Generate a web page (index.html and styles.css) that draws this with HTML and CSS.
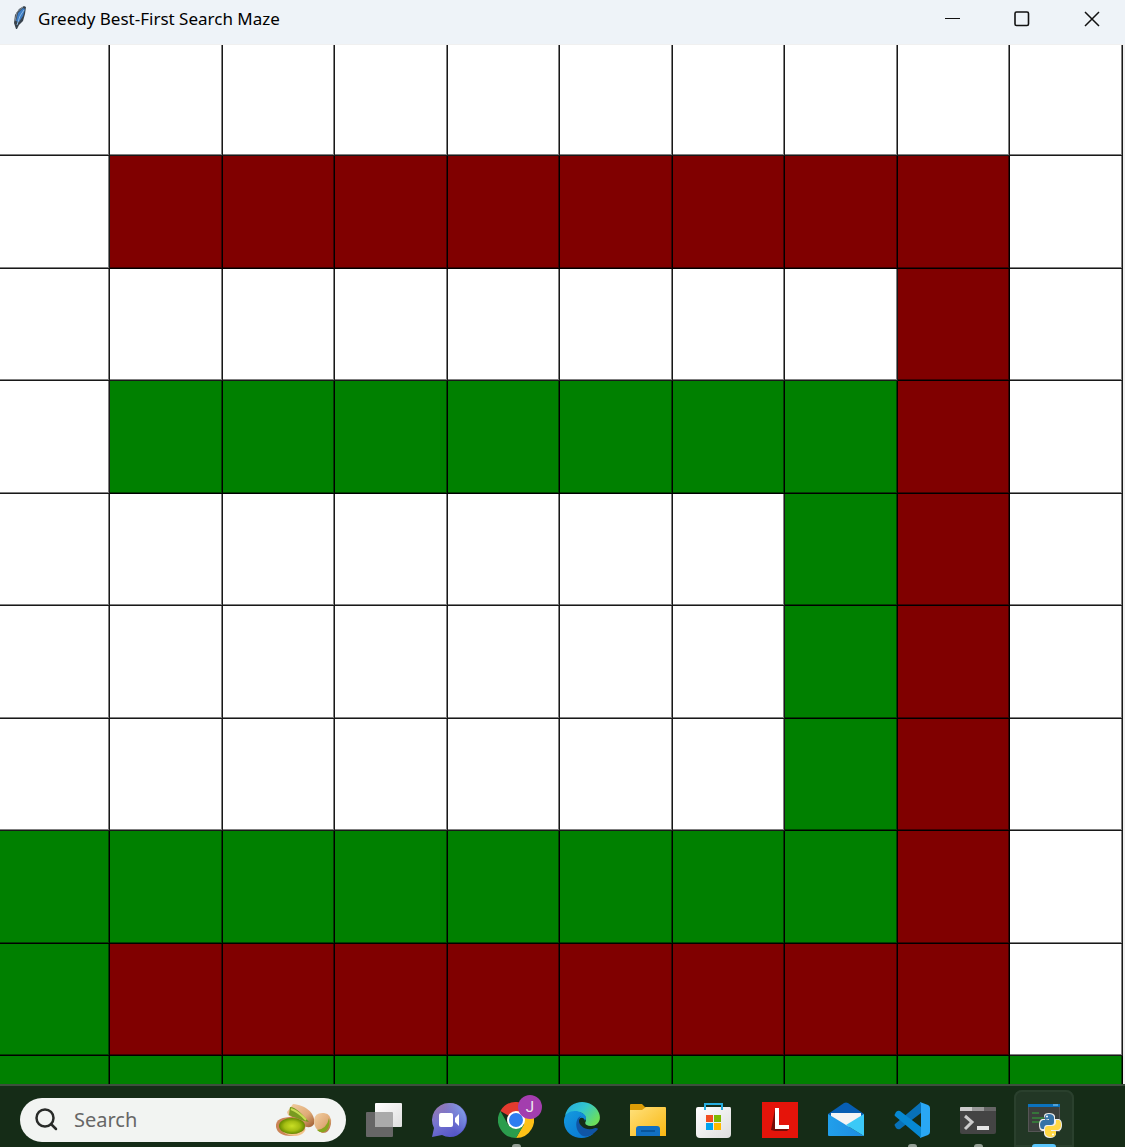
FILE: index.html
```html
<!DOCTYPE html>
<html lang="en">
<head>
<meta charset="utf-8">
<title>Greedy Best-First Search Maze</title>
<link rel="stylesheet" href="styles.css">
</head>
<body>
<header class="titlebar">
  <svg class="feather" viewBox="0 0 16 26" aria-hidden="true"><path d="M4 24 2 18 3 10 7 4 12 1 14 2 13 9 11 16 7 20 5 24Z" fill="#39434d"/><path d="M4 16 6 8 11 3 13 4 11 11 7 17Z" fill="#3d7cc4"/><path d="M3 16 5 7 11 2" fill="none" stroke="#879099"/><path d="m5 20 3-9 4-6" fill="none" stroke="#8fbce6"/></svg>
  <h1 class="title">Greedy Best-First Search Maze</h1>
  <div class="controls">
    <button class="control" aria-label="Minimize"><svg viewBox="0 0 16 16"><path d="M1 7.500h15"/></svg></button>
    <button class="control" aria-label="Maximize"><svg viewBox="0 0 16 16"><rect x="1" y="1" width="13.500" height="13.500" rx="1.500" stroke-width="1.600"/></svg></button>
    <button class="control" aria-label="Close"><svg viewBox="0 0 16 16"><path d="m1 1 14 14M15 1 1 15" stroke-width="1.500"/></svg></button>
  </div>
</header>
<main class="maze" id="maze"></main>
<footer class="taskbar">
  <label class="search">
    <svg class="lens" viewBox="0 0 24 24" aria-hidden="true"><circle cx="10" cy="10" r="8.500"/><path d="m16 16 5 5"/></svg>
    <input class="search-input" type="text" placeholder="Search" aria-label="Search">
    <svg class="pistachio" viewBox="0 0 58 34" aria-hidden="true">
      <defs><linearGradient id="shell" x2="1" y2="1"><stop stop-color="#f3d0a4"/><stop offset=".6" stop-color="#dfaa77"/><stop offset="1" stop-color="#9b572d"/></linearGradient><radialGradient id="nut"><stop stop-color="#c9df25"/><stop offset=".6" stop-color="#a4bd12"/><stop offset="1" stop-color="#658900"/></radialGradient></defs>
      <path d="M12 9 18 1C30 2 41 10 39 21Q35 27 27 22L13 12Z" fill="url(#shell)"/>
      <path d="M15 4C21 4 27 11 34 19Q22 17 14 12Z" fill="#789a20"/><path d="M16 6Q24 9 31 17" fill="none" stroke="#c7dc55" stroke-width="2"/>
      <path d="M1 24C0 16 8 14 18 14 27 16 32 20 30 26 28 31 22 33 16 33 8 33 2 30 1 24Z" fill="#cb8457"/><path d="M5 25Q17 36 31 26 28 33 20 33 10 33 5 25Z" fill="#f3c48c"/><ellipse cx="17" cy="23" rx="13" ry="8" fill="url(#nut)"/>
      <path d="M39 17Q40 9 49 10 57 11 56 21 54 31 47 30 39 27 39 17Z" fill="url(#shell)"/><path d="M54 15Q52 26 42 27 46 31 51 28 56 22 54 15Z" fill="#86a61d"/>
    </svg>
  </label>
  <nav class="apps" aria-label="Taskbar">
    <button class="app" aria-label="Task view"><svg class="icon" viewBox="0 0 36 36"><defs><linearGradient id="pane" x2="1" y2="1"><stop stop-color="#fff"/><stop offset="1" stop-color="#dedede"/></linearGradient></defs><rect x="9" y="1" width="27" height="24" rx="1" fill="url(#pane)"/><path d="M1 10h8v15h18v9q0 1-1 1H1q-1 0-1-1V11q0-1 1-1Z" fill="#666"/><path d="M9 10h17q1 0 1 1v14H9Z" fill="#aaa"/></svg></button>
    <button class="app" aria-label="Chat"><svg class="icon" viewBox="0 0 36 36"><defs><linearGradient id="chat" x1=".1" x2=".7" y2="1"><stop stop-color="#9b79ac"/><stop offset=".45" stop-color="#7775cf"/><stop offset="1" stop-color="#5052c8"/></linearGradient><linearGradient id="sky" x1=".2" y1=".5" x2="1" y2=".1"><stop offset=".3" stop-color="#7785dc" stop-opacity="0"/><stop offset="1" stop-color="#83acf0"/></linearGradient></defs><path d="M17 1a17 17 0 1 1-7 32L0 35l2-9A17 17 0 0 1 17 1Z" fill="url(#chat)"/><circle cx="17" cy="18" r="17" fill="url(#sky)"/><rect x="7" y="11" width="14" height="14" rx="2" fill="#fff"/><path d="m23 16 4-4v12l-4-4Z" fill="#fff"/></svg></button>
    <button class="app" aria-label="Chrome"><svg class="icon" viewBox="0 0 36 36"><path d="M18 18 2.400 9A18 18 0 0 1 33.600 9L18 9Z" fill="#e33b2e"/><path d="M18 9h15.600A18 18 0 0 1 18 36l8-14Z" fill="#fdc116"/><path d="M2.400 9 10 22.500l16 0L18 36A18 18 0 0 1 2.400 9Z" fill="#2b9d4d"/><circle cx="18" cy="18" r="9" fill="#fff"/><circle cx="18" cy="18" r="7" fill="#2d7df0"/></svg><span class="badge">J</span><span class="running"></span></button>
    <button class="app" aria-label="Edge"><svg class="icon" viewBox="0 0 36 36"><defs><linearGradient id="wave" x2="1" y2=".6"><stop stop-color="#24a7df"/><stop offset=".5" stop-color="#32c6cf"/><stop offset="1" stop-color="#6cdf5b"/></linearGradient><linearGradient id="blue" y2="1"><stop stop-color="#149bdf"/><stop offset="1" stop-color="#0872cf"/></linearGradient></defs><path d="M1 14C4-3 28-5 35 11 38 19 33 24 27 24 22 24 20 22 22 19 23 10 11 6 1 14Z" fill="url(#wave)"/><path d="M0 18C1 9 11 7 18 11 22 13 23 16 21 19 20 14 14 15 14 21 14 28 23 30 29 32 18 41-1 34 0 18Z" fill="url(#blue)"/><path d="M17 14C10 17 11 30 19 34 25 36 31 31 34 27 34 26 32 26 31 26 23 30 15 24 15 19Q15 16 17 14Z" fill="#1055a5"/></svg></button>
    <button class="app" aria-label="File Explorer"><svg class="icon" viewBox="0 0 36 36"><defs><linearGradient id="folder" x2="1" y2="1"><stop stop-color="#ffe17c"/><stop offset="1" stop-color="#f9b711"/></linearGradient></defs><path d="M0 3q0-1 1-1h11l3 3h20v8H0Z" fill="#db9d06"/><path d="M0 8h12l4-3h19q1 0 1 1v28H0Z" fill="url(#folder)"/><path d="M6 34v-7q0-3 3-3h18q3 0 3 3v7Z" fill="#116fc2"/><path d="M11 29h14" stroke="#064d91" stroke-width="1.500"/></svg></button>
    <button class="app" aria-label="Microsoft Store"><svg class="icon" viewBox="0 0 36 36"><path d="M2 5h32q1 0 1 2v25q0 4-4 4H4q-4 0-4-4V7q0-2 2-2Z" fill="url(#pane)"/><path d="M9 8V2h17v6" fill="none" stroke="#28aee0" stroke-width="2"/><path d="M10 13h7v7h-7Z" fill="#f14e20"/><path d="M18 13h7v7h-7Z" fill="#7fb900"/><path d="M10 21h7v7h-7Z" fill="#00a3ee"/><path d="M18 21h7v7h-7Z" fill="#ffb900"/></svg></button>
    <button class="app" aria-label="L app"><svg class="icon" viewBox="0 0 36 36"><path d="M0 0h36v36H0Z" fill="#e5140a"/><path d="m13 7-4 21 4 1h12l2-2H15V7Z" fill="#760c08"/><path d="M13 6h4v17h10v4H13Z" fill="#fff"/></svg></button>
    <button class="app" aria-label="Mail"><svg class="icon" viewBox="0 0 36 36"><defs><linearGradient id="mail" x2="1"><stop stop-color="#219feb"/><stop offset="1" stop-color="#1d8cdf"/></linearGradient></defs><path d="M0 12 16 1q2-1 4 0l16 11-4 8H4Z" fill="#075eb3"/><path d="M3 11h30v7L18 26 3 18Z" fill="#f4f4f4"/><path d="m0 12 18 11 18 11H1q-1 0-1-1Z" fill="url(#mail)"/><path d="M36 12 18 23l18 11Z" fill="#3bc9f7"/></svg></button>
    <button class="app" aria-label="Visual Studio Code"><svg class="icon" viewBox="0 0 36 36"><path d="M27 0v11L6 27q-2 1-4-1l-1-2q-1-1 0-2Z" fill="#0871b8"/><path d="M27 36V25L6 9Q4 8 2 10l-1 2q-1 1 0 2Z" fill="#0788d2"/><path d="m26 0 8 3q2 1 2 3v24q0 2-2 3l-8 3q1-1 1-3V3q0-2-1-3Z" fill="#29a7f4"/></svg><span class="running"></span></button>
    <button class="app" aria-label="Terminal"><svg class="icon" viewBox="0 0 36 36"><path d="M0 5h36v25q0 2-2 2H2q-2 0-2-2Z" fill="#444"/><path d="M0 9V6q0-1 1-1h11v4Z" fill="#ccc"/><path d="M12 5h12v4H12Z" fill="#999"/><path d="M24 5h11q1 0 1 1v3H24Z" fill="#666"/><path d="m5 14 7 6-7 7" fill="none" stroke="#ccc" stroke-width="3"/><path d="M17 24h12v4H17Z" fill="#e5e5e5"/></svg><span class="running"></span></button>
    <button class="app active" aria-label="Python"><svg class="icon" viewBox="0 0 36 36"><path d="M2 3h32v27H2Z" fill="#555"/><path d="M3 5h30v24H3Z" fill="#3c3f3d"/><path d="M2 2h32v3H2Z" fill="#0b72bd"/><path d="M27 3h5" stroke="#9bd0ee"/><path d="M6 11h7m-7 5h12m-12 4h10" stroke="#35883a" stroke-width="1.500"/><path d="M18 14q0-3 5-3t6 3v3h4q3 1 3 6t-3 6h-3v3q-1 4-6 4t-6-4v-3h-2q-3-1-3-6t3-6h3Z" fill="#eee"/><path d="M19 18v-3q0-3 4-3t5 3v5q0 3-3 3h-4q-3 0-3 4h-2q-2-1-2-4 0-4 3-5h6v-1Z" fill="#3673a7"/><path d="M30 18h3q2 1 2 5t-3 5h-7v1h5v2q0 4-5 4t-6-4v-4q0-3 3-3h4q4 0 4-4Z" fill="#ffd845"/><circle cx="21" cy="14.500" r="1" fill="#fff"/><circle cx="27" cy="32.500" r="1" fill="#fff"/></svg><span class="running"></span></button>
  </nav>
</footer>
<script src="maze.js"></script>
</body>
</html>
```
FILE: styles.css
```css
* { box-sizing: border-box; }

body {
  margin: 0;
  min-height: 100vh;
  display: flex;
  flex-direction: column;
  background: #f0f0f0;
  font-family: "Noto Sans", "Open Sans", sans-serif;
}

button {
  padding: 0;
  border: 0;
  background: none;
}

svg { display: block; }

.titlebar {
  height: 45px;
  display: flex;
  align-items: flex-start;
  padding-left: 12px;
  background: #eef3f8;
  border-bottom: 1px solid #f0f0f0;
}

.feather {
  width: 16px;
  height: 26px;
  margin-top: 5px;
}

.title {
  flex: 1;
  margin: 0 0 0 10px;
  color: #000;
  font-size: 17px;
  font-weight: 400;
  line-height: 38px;
}

.controls { display: flex; }

.control {
  width: 70px;
  height: 37px;
  display: grid;
  place-items: center;
}

.control:last-child {
  width: 66px;
  margin-left: 2px;
}

.control svg {
  width: 16px;
  height: 16px;
  fill: none;
  stroke: #111;
}

.maze {
  flex: 1;
  display: grid;
  grid-template-columns: 110px repeat(9, 1fr);
  grid-template-rows: 111px repeat(8, 1fr) 28px;
  padding-right: 2px;
}

.cell {
  background: #fff;
  border: 0 solid #181818;
  border-right-width: 1px;
  border-bottom-width: 1px;
  box-shadow: inset -1px -1px rgba(0, 0, 0, 0.5);
}

.wall { background: #800000; }
.path { background: #008000; }

.wall,
.path { border-color: #000; }

.cell:nth-last-child(-n+10) {
  border-bottom-width: 0;
  box-shadow: inset -1px 0 rgba(0, 0, 0, 0.5);
}

.taskbar {
  height: 63px;
  display: flex;
  align-items: center;
  padding-left: 20px;
  background: #152c17;
  border-top: 2px solid #3d4f3d;
}

.search {
  width: 326px;
  height: 44px;
  display: flex;
  align-items: center;
  margin-top: 6px;
  padding: 0 13px 0 15px;
  border-radius: 22px;
  background: #f2f4f2;
}

.lens {
  width: 24px;
  height: 24px;
  fill: none;
  stroke: #292b29;
  stroke-width: 2.5;
  stroke-linecap: round;
}

.search-input {
  flex: 1;
  min-width: 0;
  margin-left: 15px;
  padding: 0;
  border: 0;
  outline: 0;
  background: none;
  color: #666;
  font: 20px/28px "Noto Sans", "Open Sans", sans-serif;
}

.search-input::placeholder { color: #666; }

.pistachio {
  width: 58px;
  height: 34px;
}

.apps {
  height: 61px;
  display: flex;
  align-items: flex-end;
  gap: 6px;
  margin-left: 8px;
}

.app {
  position: relative;
  width: 60px;
  height: 57px;
  padding: 12px;
}

.active {
  border-radius: 8px 8px 0 0;
  background: #223725;
  box-shadow: inset 0 0 0 2px #2a402d;
}

.icon {
  width: 36px;
  height: 36px;
}

.badge {
  position: absolute;
  top: 5px;
  right: 4px;
  width: 24px;
  height: 24px;
  border-radius: 50%;
  background: #a33eae;
  color: #eee;
  font: 15px/24px "Roboto", sans-serif;
}

.running {
  position: absolute;
  bottom: 0;
  left: 26px;
  width: 9px;
  height: 3px;
  border-radius: 3px 3px 0 0;
  background: #929d93;
}

.active .running {
  left: 18px;
  width: 24px;
  background: #5ac5fb;
}
```
FILE: maze.js
```js
// "." is open ground, "w" a wall, "p" a cell on the searched path.
const rows = [
  "..........",
  ".wwwwwwww.",
  "........w.",
  ".pppppppw.",
  ".......pw.",
  ".......pw.",
  ".......pw.",
  "ppppppppw.",
  "pwwwwwwww.",
  "pppppppppp"
];
const kinds = { ".": "cell", w: "cell wall", p: "cell path" };
const maze = document.getElementById("maze");
for (const mark of rows.join("")) {
  const cell = document.createElement("div");
  cell.className = kinds[mark];
  maze.append(cell);
}
```
